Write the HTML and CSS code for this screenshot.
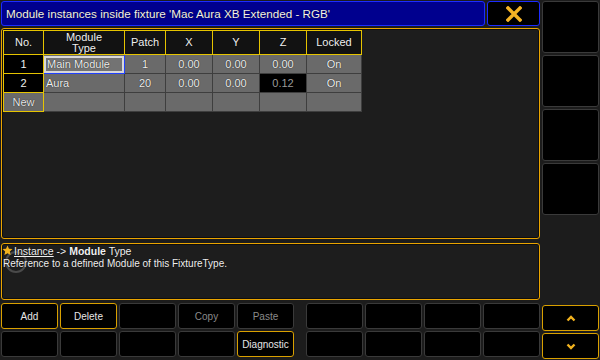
FILE: index.html
```html
<!DOCTYPE html>
<html lang="en">
<head>
    <meta charset="UTF-8">
    <title>Module instances</title>
    <link rel="stylesheet" href="styles.css">
</head>
<body>
<div class="screen">

    <!-- Left side: title, table, help text, buttons -->
    <div class="main-col">
        <div class="title-row">
            <div class="title">Module instances inside fixture 'Mac Aura XB Extended - RGB'</div>
            <div class="close-btn">
                <svg width="16" height="16" viewBox="0 0 16 16">
                    <path d="M2 2 L14 14 M14 2 L2 14" stroke="#f5b324" stroke-width="3.4" stroke-linecap="square"/>
                </svg>
            </div>
        </div>

        <div class="panel table-panel">
            <table class="grid">
                <tr class="head">
                    <td class="c-no">No.</td>
                    <td class="c-type">Module<br>Type</td>
                    <td class="c-patch">Patch</td>
                    <td class="c-num">X</td>
                    <td class="c-num">Y</td>
                    <td class="c-num">Z</td>
                    <td class="c-lock">Locked</td>
                </tr>
                <tr>
                    <td class="no">1</td>
                    <td class="cell left selected"><span>Main Module</span></td>
                    <td class="cell">1</td>
                    <td class="cell">0.00</td>
                    <td class="cell">0.00</td>
                    <td class="cell">0.00</td>
                    <td class="cell">On</td>
                </tr>
                <tr>
                    <td class="no">2</td>
                    <td class="cell left">Aura</td>
                    <td class="cell">20</td>
                    <td class="cell">0.00</td>
                    <td class="cell">0.00</td>
                    <td class="cell dark">0.12</td>
                    <td class="cell">On</td>
                </tr>
                <tr>
                    <td class="no new">New</td>
                    <td class="cell"></td>
                    <td class="cell"></td>
                    <td class="cell"></td>
                    <td class="cell"></td>
                    <td class="cell"></td>
                    <td class="cell"></td>
                </tr>
            </table>
        </div>

        <div class="panel info-panel">
            <svg class="info-ring" width="24" height="24" viewBox="0 0 24 24">
                <circle cx="12" cy="12" r="10" fill="none" stroke="#4a4a4a" stroke-width="2"/>
            </svg>
            <div class="info-line">
                <svg class="star" width="11" height="11" viewBox="0 0 24 24">
                    <path d="M12 1 L15.2 8.2 L23 8.9 L17.1 14.1 L18.8 21.8 L12 17.8 L5.2 21.8 L6.9 14.1 L1 8.9 L8.8 8.2 Z" fill="#f2b21e"/>
                </svg><u>Instance</u> -&gt; <b>Module</b> Type
            </div>
            <div class="info-desc">Reference to a defined Module of this FixtureType.</div>
        </div>

        <div class="keys">
            <div class="key-group five">
                <div class="key on">Add</div>
                <div class="key on">Delete</div>
                <div class="key"></div>
                <div class="key dim">Copy</div>
                <div class="key dim">Paste</div>
                <div class="key"></div>
                <div class="key"></div>
                <div class="key"></div>
                <div class="key"></div>
                <div class="key on">Diagnostic</div>
            </div>
            <div class="key-group four">
                <div class="key"></div>
                <div class="key"></div>
                <div class="key"></div>
                <div class="key"></div>
                <div class="key"></div>
                <div class="key"></div>
                <div class="key"></div>
                <div class="key"></div>
            </div>
        </div>
    </div>

    <!-- Right side column -->
    <div class="side-col">
        <div class="side-btn"></div>
        <div class="side-btn"></div>
        <div class="side-btn"></div>
        <div class="side-btn"></div>
        <div class="side-space"></div>
        <div class="key on arrow">
            <svg width="10" height="7" viewBox="0 0 10 7"><path d="M1.5 5.5 L5 2 L8.5 5.5" fill="none" stroke="#f2b21e" stroke-width="2.4"/></svg>
        </div>
        <div class="key on arrow">
            <svg width="10" height="7" viewBox="0 0 10 7"><path d="M1.5 1.5 L5 5 L8.5 1.5" fill="none" stroke="#f2b21e" stroke-width="2.4"/></svg>
        </div>
    </div>

</div>
</body>
</html>
```

FILE: styles.css
```css
/* Page */
body, html {
    margin: 0;
    width: 600px;
    height: 360px;
    background-color: #1c1c1c;
    font-family: "Liberation Sans", Arial, sans-serif;
    color: #f0f0f0;
    overflow: hidden;
}

.screen {
    display: flex;
    gap: 2px;
    padding: 1px;
    height: 358px;
}

/* Left column */
.main-col {
    width: 539px;
    display: flex;
    flex-direction: column;
}

.title-row {
    display: flex;
    gap: 2px;
    height: 25px;
}

.title {
    flex: 1;
    background-color: #00008e;
    border: 1px solid #1c2cff;
    border-radius: 3px;
    font-size: 11.7px;
    line-height: 23px;
    padding-left: 4px;
    text-shadow: 0 0 1px #000;
}

.close-btn {
    width: 51px;
    background-color: #000;
    border: 1px solid #1c2cff;
    border-radius: 3px;
    display: flex;
    align-items: center;
    justify-content: center;
}

/* Orange framed panels */
.panel {
    border: 1px solid #eaa400;
    border-radius: 3px;
    background-color: #1d1d1d;
    box-shadow: inset 0 0 0 1px #0e0e0e;
    box-sizing: border-box;
}

.table-panel {
    margin-top: 2px;
    height: 211px;
    padding: 1px;
}

/* Table */
.grid {
    border-collapse: collapse;
    font-size: 11px;
    text-shadow: 0 0 1px #000;
}

.grid td {
    padding: 0;
    text-align: center;
    height: 19px;
    box-sizing: border-box;
}

.grid .head td {
    height: 24px;
    line-height: 11px;
    background-color: #121212;
    border: 1px solid #e6c400;
}

.c-no { width: 40px; }
.c-type { width: 81px; }
.c-patch { width: 41px; }
.c-num { width: 47px; }
.c-lock { width: 55px; }

.grid td.no {
    background-color: #000;
    border: 1px solid #e6c400;
}

.grid td.new {
    background-color: #6a6a6a;
    color: #e8e8e8;
}

.grid td.cell {
    background-color: #6a6a6a;
    border: 1px solid #3e3e3e;
}

.grid td.left {
    text-align: left;
    padding-left: 2px;
}

.grid td.dark {
    background-color: #000;
    color: #9a9a9a;
}

.grid td.selected {
    padding: 0;
    border: 1px solid #2040ff;
}

.selected span {
    display: block;
    border: 2px solid #d8d8d8;
    background-color: #737373;
    line-height: 13px;
    padding-left: 1px;
}

/* Help text panel */
.info-panel {
    margin-top: 4px;
    height: 57px;
    position: relative;
    font-size: 10px;
    text-shadow: 0 0 1px #000;
}

.info-ring {
    position: absolute;
    left: 2px;
    top: 6px;
}

.info-line {
    position: relative;
    margin-top: 1px;
    font-size: 10.5px;
    line-height: 12px;
}

.star {
    vertical-align: -1px;
    margin-right: 1px;
}

.info-desc {
    position: relative;
    padding-left: 1px;
    margin-top: 1px;
}

/* Bottom keys */
.keys {
    margin-top: 3px;
    display: flex;
    justify-content: space-between;
}

.key-group {
    display: grid;
    grid-template-rows: 26px 26px;
    gap: 2px;
}

.key-group.five {
    grid-template-columns: repeat(5, 57px);
}

.key-group.four {
    grid-template-columns: repeat(4, 57px);
}

.key {
    background-color: #000;
    border: 1px solid #3a3a3a;
    border-radius: 3px;
    font-size: 10px;
    color: #e6e6e6;
    display: flex;
    align-items: center;
    justify-content: center;
}

.key.on {
    border-color: #d9a000;
}

.key.dim {
    color: #8a8a8a;
}

/* Right column */
.side-col {
    width: 57px;
    display: flex;
    flex-direction: column;
    gap: 2px;
}

.side-btn {
    height: 52px;
    background-color: #000;
    border: 1px solid #3a3a3a;
    border-radius: 3px;
    box-sizing: border-box;
}

.side-space {
    flex: 1;
}

.arrow {
    height: 26px;
    box-sizing: border-box;
}
```
